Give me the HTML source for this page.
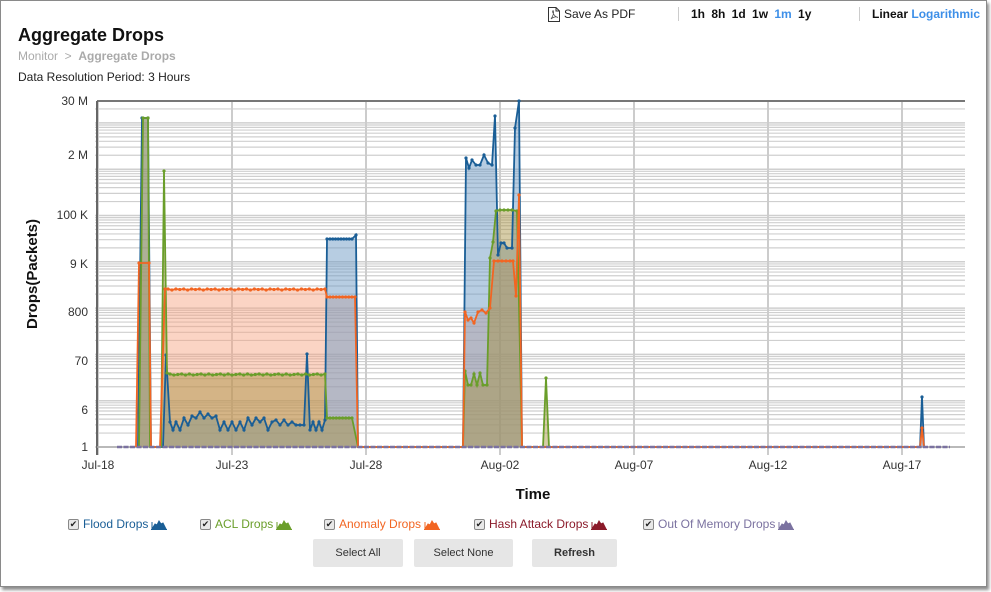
<!DOCTYPE html>
<html><head><meta charset="utf-8">
<style>
html,body{margin:0;padding:0;background:#fff;width:991px;height:592px;overflow:hidden;font-family:"Liberation Sans",Arial,sans-serif;}
#box{position:absolute;left:0;top:0;width:985px;height:585px;border:1px solid #8a8a8a;box-shadow:2px 3px 3px rgba(0,0,0,0.45);background:#fff;}
.abs{position:absolute;white-space:nowrap;}
h1{position:absolute;left:18px;top:25px;margin:0;font-size:18px;font-weight:bold;color:#111;}
.btn{position:absolute;top:539px;height:28px;background:#e6e6e6;border-radius:2px;font-size:11px;color:#333;text-align:center;line-height:28px;}
.lg{position:absolute;top:517px;font-size:12px;}
.lg svg{vertical-align:-2px;margin-left:3px;}
.cb{display:inline-block;width:9px;height:9px;border:1px solid #888;background:#e8e8e8;border-radius:2px;font-size:9px;line-height:9px;text-align:center;color:#222;vertical-align:1px;margin-right:4px;}
</style></head><body>
<div id="box"></div>
<h1>Aggregate Drops</h1>
<div class="abs" style="left:18px;top:49px;font-size:12px;color:#aaa;">Monitor &nbsp;&gt;&nbsp; <b>Aggregate Drops</b></div>
<div class="abs" style="left:18px;top:70px;font-size:12px;color:#222;">Data Resolution Period: 3 Hours</div>
<svg class="abs" style="left:548px;top:7px" width="12" height="15" viewBox="0 0 12 15"><path d="M0.5 0.5H8L11.5 4V14.5H0.5Z M8 0.5V4H11.5" fill="#fff" stroke="#333" stroke-width="1"/><path d="M3 12C5 9 6 6 5.5 4C5 3 4 4 5 6C6 8 8 10 9.5 10.5C9 9 5 10 3 12Z" fill="none" stroke="#555" stroke-width="0.8"/></svg>
<div class="abs" style="left:564px;top:7px;font-size:12px;color:#222;">Save As PDF</div>
<div class="abs" style="left:678px;top:7px;width:1px;height:14px;background:#ccc;"></div>
<div class="abs" style="left:691px;top:7px;font-size:12px;font-weight:bold;color:#111;word-spacing:3px;">1h 8h 1d 1w <span style="color:#3d8fe8">1m</span> 1y</div>
<div class="abs" style="left:859px;top:7px;width:1px;height:14px;background:#ccc;"></div>
<div class="abs" style="left:872px;top:7px;font-size:12px;font-weight:bold;color:#111;">Linear <span style="color:#3d8fe8">Logarithmic</span></div>

<svg class="abs" style="left:0;top:0" width="991" height="510" id="ch">
<g id="grid"></g>
<g font-size="12" fill="#333" text-anchor="end">
<text x="88" y="105">30 M</text><text x="88" y="159">2 M</text><text x="88" y="219">100 K</text><text x="88" y="268">9 K</text><text x="88" y="316">800</text><text x="88" y="365">70</text><text x="88" y="414">6</text><text x="88" y="451">1</text>
</g>
<g font-size="12" fill="#333" text-anchor="middle">
<text x="98" y="469">Jul-18</text><text x="232" y="469">Jul-23</text><text x="366" y="469">Jul-28</text><text x="500" y="469">Aug-02</text><text x="634" y="469">Aug-07</text><text x="768" y="469">Aug-12</text><text x="902" y="469">Aug-17</text>
</g>
<text x="533" y="499" font-size="15" font-weight="bold" text-anchor="middle" fill="#111">Time</text>
<text transform="translate(37,274) rotate(-90)" font-size="15" font-weight="bold" text-anchor="middle" fill="#111">Drops(Packets)</text>
<g id="fills"></g>
<g id="lines"></g>
</svg>

<div class="lg" style="left:68px;color:#1a5e96"><span class="cb">✔</span>Flood Drops<svg width="16" height="12"><path d="M1 11V4M1 11L4 6L6 7L8 3L10 6L12 5L15 11Z" fill="#1a5e96" stroke="#1a5e96"/><line x1="0" y1="11.5" x2="16" y2="11.5" stroke="#1a5e96"/></svg></div>
<div class="lg" style="left:200px;color:#6a9e2a"><span class="cb">✔</span>ACL Drops<svg width="16" height="12"><path d="M1 11V4M1 11L4 6L6 7L8 3L10 6L12 5L15 11Z" fill="#6a9e2a" stroke="#6a9e2a"/><line x1="0" y1="11.5" x2="16" y2="11.5" stroke="#6a9e2a"/></svg></div>
<div class="lg" style="left:324px;color:#f26522"><span class="cb">✔</span>Anomaly Drops<svg width="16" height="12"><path d="M1 11V4M1 11L4 6L6 7L8 3L10 6L12 5L15 11Z" fill="#f26522" stroke="#f26522"/><line x1="0" y1="11.5" x2="16" y2="11.5" stroke="#f26522"/></svg></div>
<div class="lg" style="left:474px;color:#8b1a2a"><span class="cb">✔</span>Hash Attack Drops<svg width="16" height="12"><path d="M1 11V4M1 11L4 6L6 7L8 3L10 6L12 5L15 11Z" fill="#8b1a2a" stroke="#8b1a2a"/><line x1="0" y1="11.5" x2="16" y2="11.5" stroke="#8b1a2a"/></svg></div>
<div class="lg" style="left:643px;color:#7b72a0"><span class="cb">✔</span>Out Of Memory Drops<svg width="16" height="12"><path d="M1 11V4M1 11L4 6L6 7L8 3L10 6L12 5L15 11Z" fill="#7b72a0" stroke="#7b72a0"/><line x1="0" y1="11.5" x2="16" y2="11.5" stroke="#7b72a0"/></svg></div>
<div class="btn" style="left:313px;width:90px;">Select All</div>
<div class="btn" style="left:414px;width:99px;">Select None</div>
<div class="btn" style="left:532px;width:85px;font-weight:bold;">Refresh</div>

<script>
var NS="http://www.w3.org/2000/svg";
function el(p,t,a){var e=document.createElementNS(NS,t);for(var k in a)e.setAttribute(k,a[k]);p.appendChild(e);return e;}
var g=document.getElementById('grid');
function Y(v){return 447-46.3*Math.log10(v);}
for(var d=0;d<8;d++){for(var m=1;m<10;m++){var v=m*Math.pow(10,d);var y=Y(v);if(y<101)continue;
el(g,'line',{x1:95,x2:965,y1:y,y2:y,stroke:'#cfcfcf','stroke-width':m==1?1.5:1.2});}}
[98,232,366,500,634,768,902].forEach(function(x){el(g,'line',{x1:x,x2:x,y1:101,y2:455,stroke:'#cccccc','stroke-width':2});});
el(g,'line',{x1:97,x2:965,y1:101,y2:101,stroke:'#777','stroke-width':2});
el(g,'line',{x1:97,x2:97,y1:101,y2:455,stroke:'#666','stroke-width':2});
el(g,'line',{x1:97,x2:965,y1:447,y2:447,stroke:'#aaa','stroke-width':1.5});
var F=document.getElementById('fills'),L=document.getElementById('lines');
var queue=[];
function series(pts,col,fill,op){
 var str=pts.map(function(p){return p[0]+','+p[1]}).join(' ');
 el(F,'polygon',{points:pts[0][0]+',447 '+str+' '+pts[pts.length-1][0]+',447',fill:fill,'fill-opacity':op});
 queue.push(function(){
 el(L,'polyline',{points:str,fill:'none',stroke:col,'stroke-width':1.8});
 pts.forEach(function(p){if(p[1]<446)el(L,'circle',{cx:p[0],cy:p[1],r:1.6,fill:col});});});
}
function flat(x1,x2,y,n,j){var a=[];for(var i=0;i<=n;i++){a.push([x1+(x2-x1)*i/n,y+(j?j[i%j.length]:0)]);}return a;}
var an=[[136,447],[139,263],[149,263],[151,447],[160,447],[165,289]].concat(flat(168,325,289,40,[0,1,0,0.5])).concat([[327,297]]).concat(flat(330,355,297,8)).concat([[358,447],[463,447],[465,312],[468,320],[471,318],[474,323],[478,312],[482,310],[486,313],[490,308],[494,261],[498,261],[502,261],[506,261],[510,261],[513,261],[516,296],[519,195],[522,447],[920,447],[922,428],[924,447]]);
var fl=[[138,447],[142,118],[148,118],[151,447],[163,447],[166,355],[170,422],[173,430],[176,422],[180,430],[184,418],[188,425],[192,416],[196,418],[200,412],[204,418],[208,414],[212,418],[216,416],[220,430],[224,422],[228,430],[232,422],[236,430],[240,422],[244,430],[248,418],[252,425],[256,418],[260,422],[264,418],[268,430],[272,422],[276,420],[280,425],[284,420],[288,425],[292,422],[296,425],[300,425],[304,425],[307,354],[310,430],[313,422],[316,430],[319,422],[322,430],[325,420],[327,239]].concat(flat(330,352,239,8)).concat([[356,235],[358,447],[463,447],[466,158],[469,168],[472,160],[476,165],[480,165],[484,155],[488,163],[492,165],[495,116],[498,255],[501,243],[504,243],[507,248],[512,248],[515,128],[519,101],[522,447],[920,447],[922,397],[924,447]]);
var ac=[[139,447],[143,118],[148,118],[150,447],[161,447],[164,171],[167,373]].concat(flat(170,325,374,40,[0,1,0.5,0,1])).concat([[327,418]]).concat(flat(330,352,418,7)).concat([[358,447],[463,447],[465,371],[468,385],[471,385],[474,374],[477,385],[480,373],[483,385],[487,385],[490,258],[493,242],[496,211],[500,210],[504,210],[508,210],[512,210],[517,211],[522,447],[543,447],[546,378],[549,447]]);
series(an,'#f26522','#f7a07c',0.45);
series(fl,'#1a5e96','#6f9cc6',0.5);
series(ac,'#6a9e2a','#a58e3c',0.45);
queue[1]();queue[2]();queue[0]();
el(L,'line',{x1:117,x2:950,y1:447,y2:447,stroke:'#7b72a0','stroke-width':2.5,'stroke-dasharray':'5,1.5'});
</script>
</body></html>
